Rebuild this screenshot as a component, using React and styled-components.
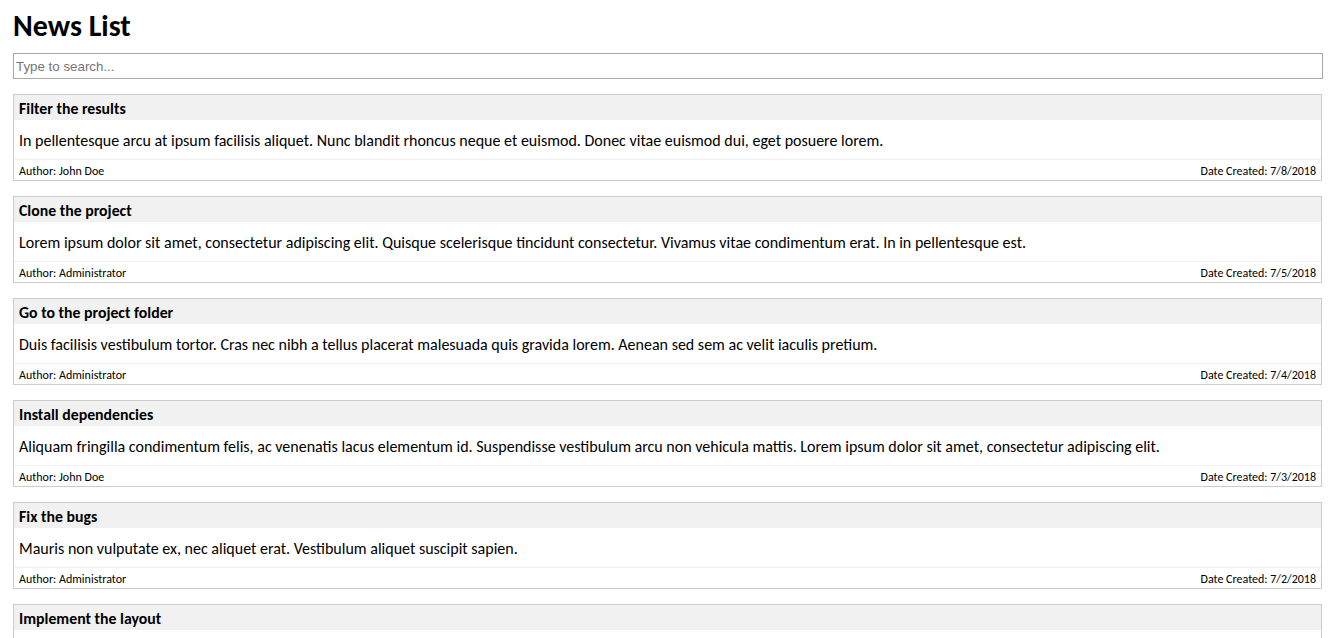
import React from "react";
import styled, { createGlobalStyle } from "styled-components";

const Global = createGlobalStyle`
  html, body { margin: 0; padding: 0; background: #fff; }
  body { font-family: Calibri, Carlito, Lato, "Liberation Sans", sans-serif; color: #000; }
  *, *::before, *::after { box-sizing: border-box; }
`;

const Page = styled.div`
  padding: 0 14px 0 13px;
`;

const Title = styled.h1`
  font-size: 30px;
  line-height: 34px;
  font-weight: 700;
  margin: 9px 0 10px;
`;

const Search = styled.input`
  display: block;
  width: 100%;
  height: 26px;
  border: 1px solid #a9a9a9;
  padding: 0 2px;
  margin: 0 0 15px;
  font-family: "Liberation Sans", Arial, sans-serif;
  font-size: 13.33px;
  outline: none;
  &::placeholder { color: #757575; }
`;

const List = styled.div`
  display: flex;
  flex-direction: column;
  gap: 15px;
`;

const Card = styled.div`
  border: 1px solid #ccc;
  margin-right: 1px;
`;

const CardHead = styled.div`
  height: 25px;
  background: #f1f1f1;
  padding: 2px 5px 0;
  display: flex;
  align-items: center;
  font-weight: 700;
  font-size: 15.8px;
`;

const CardBody = styled.div`
  height: 39px;
  padding: 2px 5px 0;
  display: flex;
  align-items: center;
  font-size: 16px;
`;

const CardFoot = styled.div`
  height: 21px;
  border-top: 1px solid #eee;
  padding: 2px 5px 0;
  display: flex;
  align-items: center;
  justify-content: space-between;
  font-size: 12px;
`;

const news = [
  { t: "Filter the results", b: "In pellentesque arcu at ipsum facilisis aliquet. Nunc blandit rhoncus neque et euismod. Donec vitae euismod dui, eget posuere lorem.", a: "John Doe", d: "7/8/2018" },
  { t: "Clone the project", b: "Lorem ipsum dolor sit amet, consectetur adipiscing elit. Quisque scelerisque tincidunt consectetur. Vivamus vitae condimentum erat. In in pellentesque est.", a: "Administrator", d: "7/5/2018" },
  { t: "Go to the project folder", b: "Duis facilisis vestibulum tortor. Cras nec nibh a tellus placerat malesuada quis gravida lorem. Aenean sed sem ac velit iaculis pretium.", a: "Administrator", d: "7/4/2018" },
  { t: "Install dependencies", b: "Aliquam fringilla condimentum felis, ac venenatis lacus elementum id. Suspendisse vestibulum arcu non vehicula mattis. Lorem ipsum dolor sit amet, consectetur adipiscing elit.", a: "John Doe", d: "7/3/2018" },
  { t: "Fix the bugs", b: "Mauris non vulputate ex, nec aliquet erat. Vestibulum aliquet suscipit sapien.", a: "Administrator", d: "7/2/2018" },
  { t: "Implement the layout", b: "Praesent vel lorem a nisl ultrices feugiat. Sed sit amet dolor non lorem lobortis tempus.", a: "John Doe", d: "7/1/2018" },
];

export default function App() {
  return (
    <Page>
      <Global />
      <Title>News List</Title>
      <Search placeholder="Type to search..." />
      <List>
        {news.map((n) => (
          <Card key={n.t}>
            <CardHead>{n.t}</CardHead>
            <CardBody>{n.b}</CardBody>
            <CardFoot>
              <span>Author: {n.a}</span>
              <span>Date Created: {n.d}</span>
            </CardFoot>
          </Card>
        ))}
      </List>
    </Page>
  );
}
